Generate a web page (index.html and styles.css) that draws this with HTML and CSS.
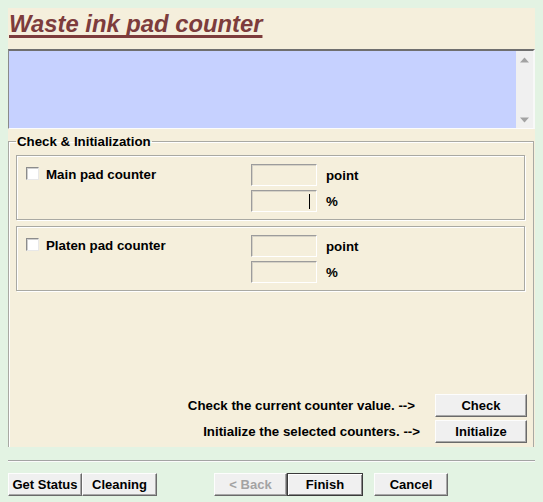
FILE: index.html
```html
<!DOCTYPE html>
<html>
<head>
<meta charset="utf-8">
<link rel="stylesheet" href="styles.css">
</head>
<body>
<div class="dialog">
  <div class="panel">
    <h1 class="title">Waste ink pad counter</h1>
    <div class="log">
      <div class="log-area"></div>
      <div class="scrollbar">
        <svg class="arrow" width="9" height="6" viewBox="0 0 9 6"><path d="M0 5.5 L4.5 0.5 L9 5.5 Z" fill="#a3a3a3"/></svg>
        <svg class="arrow" width="9" height="6" viewBox="0 0 9 6"><path d="M0 0.5 L4.5 5.5 L9 0.5 Z" fill="#a3a3a3"/></svg>
      </div>
    </div>
    <fieldset class="section">
      <legend class="section-title">Check &amp; Initialization</legend>
      <div class="group">
        <label class="choice"><input type="checkbox" class="check"><span>Main pad counter</span></label>
        <div class="fields">
          <div class="field-row"><div class="field"></div><span class="unit">point</span></div>
          <div class="field-row"><div class="field"><span class="caret"></span></div><span class="unit">%</span></div>
        </div>
      </div>
      <div class="group">
        <label class="choice"><input type="checkbox" class="check"><span>Platen pad counter</span></label>
        <div class="fields">
          <div class="field-row"><div class="field"></div><span class="unit">point</span></div>
          <div class="field-row"><div class="field"></div><span class="unit">%</span></div>
        </div>
      </div>
      <div class="actions">
        <div class="action-row"><span class="action-text first">Check the current counter value. --&gt;</span><button class="btn action-btn">Check</button></div>
        <div class="action-row"><span class="action-text second">Initialize the selected counters. --&gt;</span><button class="btn action-btn">Initialize</button></div>
      </div>
    </fieldset>
  </div>
  <div class="separator"></div>
  <div class="footer">
    <button class="btn w-status">Get Status</button>
    <button class="btn w-clean">Cleaning</button>
    <button class="btn w-back" disabled>&lt; Back</button>
    <button class="btn default w-finish">Finish</button>
    <button class="btn w-cancel">Cancel</button>
  </div>
</div>
</body>
</html>
```

FILE: styles.css
```css
* { box-sizing: border-box; }
html, body { margin: 0; padding: 0; }
body {
  background: #e3f3e3;
  font-family: "Liberation Sans", Arial, sans-serif;
  font-size: 13.3px;
  font-weight: bold;
  color: #000;
  width: 543px;
  height: 502px;
  overflow: hidden;
}
.dialog { padding-top: 8px; }
.panel {
  margin-left: 8px;
  width: 527px;
  height: 439px;
  background: #f5efdc;
  overflow: hidden;
}
.title {
  margin: 0;
  height: 41px;
  padding: 3px 0 0 1px;
  font-size: 23.8px;
  line-height: 26px;
  font-style: italic;
  font-weight: bold;
  color: #7d3c3c;
  text-decoration: underline;
  text-decoration-thickness: 3px;
  text-underline-offset: 3px;
  text-decoration-skip-ink: none;
}
.log {
  display: flex;
  height: 80px;
  border-top: 2px solid #6f6f6f;
  border-left: 1px solid #8a8a8a;
  border-bottom: 1px solid #fcfcfc;
  border-right: 2px solid #f8f8f8;
}
.log-area { flex: 1; background: #c6d1ff; }
.scrollbar {
  width: 17px;
  background: #f0f0f0;
  display: flex;
  flex-direction: column;
  justify-content: space-between;
  align-items: center;
  padding: 6px 0 5px;
}
.arrow { display: block; }
.section {
  margin: 5px 1px 0 0;
  padding: 0 8px 6px 7px;
  border: 1px solid #a9a9a3;
  border-bottom: none;
  box-shadow: inset 1px 1px 0 #fff;
  min-width: 0;
}
.section-title {
  padding: 0 1px;
  line-height: 15px;
  font-size: 13.3px;
}
.group {
  display: flex;
  margin-top: 6px;
  height: 65px;
  padding: 8px 0 0 9px;
  border: 1px solid #a9a9a3;
  box-shadow: inset 1px 1px 0 #fff, 1px 1px 0 #fff;
}
.group + .group { margin-top: 6px; }
.choice {
  display: flex;
  align-items: center;
  width: 225px;
  height: 22px;
  gap: 7px;
  padding-bottom: 1px;
}
.check {
  appearance: none;
  -webkit-appearance: none;
  margin: 0 0 3px 0;
  width: 13px;
  height: 13px;
  background: #fff;
  border: 1px solid;
  border-color: #8c8c8c #e8e8e8 #e8e8e8 #8c8c8c;
  box-shadow: inset 1px 1px 0 #cfcfcf;
}
.fields { display: flex; flex-direction: column; gap: 4px; }
.field-row { display: flex; align-items: center; }
.field {
  position: relative;
  width: 66px;
  height: 22px;
  border: 1px solid;
  border-color: #9c9c9c #fff #fff #9c9c9c;
  box-shadow: inset 1px 1px 0 #d6d2c6;
}
.caret {
  position: absolute;
  left: 57px;
  top: 3px;
  width: 1px;
  height: 15px;
  background: #000;
}
.unit { margin-left: 9px; }
.actions {
  margin-top: 103px;
  display: flex;
  flex-direction: column;
  gap: 3px;
  margin-right: -2px;
}
.action-row {
  display: flex;
  justify-content: flex-end;
  align-items: center;
}
.action-text.first { margin-right: 20px; }
.action-text.second { margin-right: 15px; }
.btn {
  height: 23px;
  padding: 0;
  margin: 0;
  font-family: "Liberation Sans", Arial, sans-serif;
  font-size: 13px;
  font-weight: bold;
  color: #000;
  background: #f0f0f0;
  border: 1px solid;
  border-color: #fdfdfd #6a6a6a #6a6a6a #fdfdfd;
  box-shadow: inset -1px -1px 0 #a8a8a8;
}
.btn:disabled { color: #a3a3a3; }
.btn.default {
  border-color: #3a3a3a;
  box-shadow: inset 1px 1px 0 #fff, inset -1px -1px 0 #8a8a8a;
}
.action-btn { width: 92px; }
.separator {
  margin: 13px 0 0 8px;
  width: 527px;
  height: 2px;
  border-top: 1px solid #a4a4a4;
  border-bottom: 1px solid #fbfbfb;
}
.footer {
  display: flex;
  margin-top: 11px;
  padding-left: 8px;
}
.w-status { width: 74px; }
.w-clean { width: 75px; }
.w-back { width: 73px; margin-left: 57px; }
.w-finish { width: 76px; }
.w-cancel { width: 74px; margin-left: 11px; }
```
